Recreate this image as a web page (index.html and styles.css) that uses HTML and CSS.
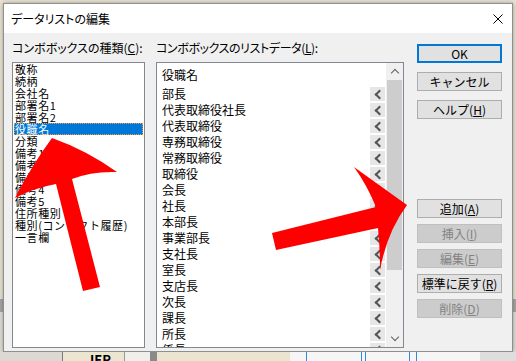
FILE: index.html
```html
<!DOCTYPE html>
<html lang="ja">
<head>
    <meta charset="UTF-8">
    <meta name="viewport" content="width=device-width, initial-scale=1.0">
    <title>データリストの編集</title>
    <link rel="stylesheet" href="styles.css">
</head>
<body>
    <div class="dialog">
        <div class="titlebar">
            <span class="title">データリストの編集</span>
            <svg class="close" width="10" height="10" viewBox="0 0 10 10">
                <path d="M0.5 0.5 L9.5 9.5 M9.5 0.5 L0.5 9.5" stroke="#000" stroke-width="1"/>
            </svg>
        </div>
        <div class="content">
            <div class="col-kind">
                <div class="label">コンボボックスの種類(<u>C</u>):</div>
                <ul class="kind-list">
                    <li>敬称</li>
                    <li>続柄</li>
                    <li>会社名</li>
                    <li>部署名1</li>
                    <li>部署名2</li>
                    <li class="selected">役職名</li>
                    <li>分類</li>
                    <li>備考1</li>
                    <li>備考2</li>
                    <li>備考3</li>
                    <li>備考4</li>
                    <li>備考5</li>
                    <li>住所種別</li>
                    <li>種別(コンタクト履歴)</li>
                    <li>一言欄</li>
                </ul>
            </div>
            <div class="col-data">
                <div class="label narrow">コンボボックスのリストデータ(<u>L</u>):</div>
                <div class="data-box">
                    <div class="data-rows">
                        <div class="data-head">役職名</div>
                        <div class="row"><span>部長</span><i class="pick"></i></div>
                        <div class="row"><span>代表取締役社長</span><i class="pick"></i></div>
                        <div class="row"><span>代表取締役</span><i class="pick"></i></div>
                        <div class="row"><span>専務取締役</span><i class="pick"></i></div>
                        <div class="row"><span>常務取締役</span><i class="pick"></i></div>
                        <div class="row"><span>取締役</span><i class="pick"></i></div>
                        <div class="row"><span>会長</span><i class="pick"></i></div>
                        <div class="row"><span>社長</span><i class="pick"></i></div>
                        <div class="row"><span>本部長</span><i class="pick"></i></div>
                        <div class="row"><span>事業部長</span><i class="pick"></i></div>
                        <div class="row"><span>支社長</span><i class="pick"></i></div>
                        <div class="row"><span>室長</span><i class="pick"></i></div>
                        <div class="row"><span>支店長</span><i class="pick"></i></div>
                        <div class="row"><span>次長</span><i class="pick"></i></div>
                        <div class="row"><span>課長</span><i class="pick"></i></div>
                        <div class="row"><span>所長</span><i class="pick"></i></div>
                        <div class="row"><span>係長</span><i class="pick"></i></div>
                    </div>
                    <div class="vscroll">
                        <div class="arrow up"></div>
                        <div class="thumb"></div>
                        <div class="track"></div>
                        <div class="arrow down"></div>
                    </div>
                </div>
            </div>
            <div class="col-buttons">
                <div class="btn-group top">
                    <button class="btn default">OK</button>
                    <button class="btn">キャンセル</button>
                    <button class="btn">ヘルプ(<u>H</u>)</button>
                </div>
                <div class="btn-group edit">
                    <button class="btn">追加(<u>A</u>)</button>
                    <button class="btn" disabled>挿入(<u>I</u>)</button>
                    <button class="btn" disabled>編集(<u>E</u>)</button>
                    <button class="btn">標準に戻す(<u>R</u>)</button>
                    <button class="btn" disabled>削除(<u>D</u>)</button>
                </div>
            </div>
        </div>
    </div>
    <div class="under">
        <div class="seg s1"></div>
        <div class="seg s2"><b>IER</b></div>
        <div class="seg s3"></div>
        <div class="seg s4"></div>
        <div class="seg s5"></div>
        <div class="seg s6">
            <i class="vline l1"></i>
            <i class="vline l2"></i>
            <i class="vline l3"></i>
            <i class="vline l4"></i>
            <i class="vline l5"></i>
        </div>
        <div class="seg s7"></div>
    </div>

    <!-- red arrows drawn on top of the screenshot -->
    <svg class="marks" width="516" height="361" viewBox="0 0 516 361">
        <path fill="#ff0000" d="M52 138 Q86 150 117 172 Q92 171 72 179 L100 287 L83 291 L56 184 Q34 188 15 198 Q32 165 52 138 Z"/>
        <path fill="#ff0000" d="M272 233 L376 207 Q367 185 354 167 Q386 190 407 205 Q387 232 380 270 Q380 248 378 228 L276 250 Z"/>
    </svg>
</body>
</html>
```

FILE: styles.css
```css
* {
    box-sizing: border-box;
}
html, body {
    margin: 0;
}
body {
    position: relative;
    width: 516px;
    height: 361px;
    overflow: hidden;
    font-family: "Noto Sans CJK JP", "Noto Sans", sans-serif;
    font-size: 12px;
    color: #000;
    background: linear-gradient(#ebe5d5 0, #ebe5d5 299px, #a9a9a9 299px, #a9a9a9 312px, #e3e0d8 312px);
}
u {
    text-decoration: underline;
    text-underline-offset: 1px;
}
.dialog {
    margin: 3px 0 0 3px;
    width: 510px;
    height: 349px;
    border: 1px solid #8f8f8f;
    background-color: #f0f0f0;
    box-shadow: 0 0 5px rgba(0, 0, 0, 0.35);
    display: flex;
    flex-direction: column;
}
.titlebar {
    height: 29px;
    flex: none;
    background-color: #fff;
    display: flex;
    align-items: center;
    justify-content: space-between;
    padding: 1px 9px 0 7px;
}
.title {
    font-feature-settings: "palt";
    line-height: 14px;
}
.content {
    flex: 1;
    display: flex;
    padding: 8px 9px 3px 8px;
}
.label {
    height: 14px;
    line-height: 14px;
    margin-bottom: 7px;
    white-space: nowrap;
    font-feature-settings: "palt";
}
.label.narrow {
    letter-spacing: -0.4px;
}
.col-kind {
    width: 133px;
    margin-right: 11px;
}
.kind-list {
    list-style: none;
    margin: 0;
    padding: 0 1px;
    height: 286px;
    border: 1px solid #828790;
    background-color: #fff;
}
.kind-list li {
    height: 12px;
    line-height: 12px;
    font-size: 11px;
    letter-spacing: 0.6px;
    padding-left: 1px;
    white-space: nowrap;
}
.kind-list .selected {
    background-color: #0078d7;
    color: #fff;
    outline: 1px dotted #f39c45;
    outline-offset: -1px;
}
.col-data {
    width: 248px;
    margin-right: 13px;
}
.data-box {
    height: 286px;
    border: 1px solid #828790;
    background-color: #fff;
    display: flex;
}
.data-rows {
    flex: 1;
    overflow: hidden;
    padding-left: 5px;
}
.data-head {
    height: 23px;
    line-height: 23px;
}
.row {
    height: 16px;
    display: flex;
    align-items: center;
    justify-content: space-between;
}
.row span {
    line-height: 16px;
}
.pick {
    width: 15px;
    height: 14px;
    margin-right: 1px;
    background-color: #e6e6e6;
    display: flex;
    align-items: center;
    justify-content: center;
}
.pick::before {
    content: "";
    width: 5px;
    height: 5px;
    margin-left: 3px;
    border-left: 2px solid #555;
    border-bottom: 2px solid #555;
    transform: rotate(45deg);
}
.vscroll {
    width: 17px;
    background-color: #f0f0f0;
    display: flex;
    flex-direction: column;
}
.arrow {
    height: 17px;
    display: flex;
    align-items: center;
    justify-content: center;
}
.arrow::before {
    content: "";
    width: 5px;
    height: 5px;
    border-left: 1px solid #606060;
    border-top: 1px solid #606060;
}
.arrow.up::before {
    transform: rotate(45deg);
    margin-top: 3px;
}
.arrow.down::before {
    transform: rotate(225deg);
    margin-top: -3px;
}
.thumb {
    height: 190px;
    margin: 0 1px;
    background-color: #cdcdcd;
}
.track {
    flex: 1;
}
.col-buttons {
    width: 85px;
    padding-top: 3px;
}
.btn-group {
    display: flex;
    flex-direction: column;
}
.btn-group.top {
    gap: 9px;
}
.btn-group.edit {
    margin-top: 80px;
    gap: 6px;
}
.btn {
    height: 19px;
    padding: 0;
    font-family: inherit;
    font-size: 12px;
    line-height: 17px;
    color: #000;
    background-color: #e1e1e1;
    border: 1px solid #adadad;
    text-align: center;
}
.btn.default {
    border: 2px solid #0078d7;
    line-height: 15px;
}
.btn:disabled {
    background-color: #cccccc;
    border-color: #bfbfbf;
    color: #838383;
}
.under {
    height: 9px;
    display: flex;
}
.seg {
    height: 9px;
}
.s1 {
    width: 63px;
    background-color: #dcd9d2;
    border-right: 1px solid #7a7a7a;
}
.s2 {
    width: 62px;
    background-color: #ece6d0;
    border-right: 1px solid #9a9a9a;
    padding-left: 27px;
    line-height: 16px;
    font-size: 13px;
    overflow: hidden;
}
.s3 {
    width: 25px;
    background-color: #f0efe9;
}
.s4 {
    width: 7px;
    background-color: #8a8a8a;
}
.s5 {
    width: 133px;
    background-color: #ebe4cf;
}
.s6 {
    flex: 1;
    background-color: #f6f6f6;
    display: flex;
}
.s7 {
    width: 36px;
    background-color: #dedede;
}
.vline {
    width: 1px;
    height: 9px;
    background-color: #2f8ad8;
}
.l1 { margin-left: 16px; }
.l2 { margin-left: 54px; }
.l3 { margin-left: 3px; }
.l4 { margin-left: 43px; }
.l5 { margin-left: 6px; }
.marks {
    position: absolute;
    left: 0;
    top: 0;
    pointer-events: none;
}
```
